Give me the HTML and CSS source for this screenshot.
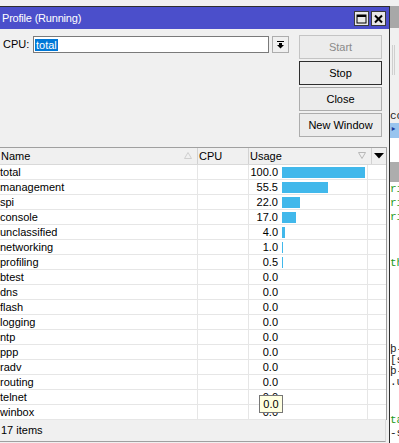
FILE: index.html
```html
<!DOCTYPE html>
<html lang="en">
<head>
    <meta charset="UTF-8">
    <meta name="viewport" content="width=device-width, initial-scale=1.0">
    <title>Profile (Running)</title>
    <link rel="stylesheet" href="styles.css">
</head>
<body>
    <div class="desk">
        <div class="window">
            <!-- Barra de titulo -->
            <div class="titlebar">
                <span class="title">Profile (Running)</span>
                <span class="tb-btn">
                    <svg width="11" height="10" viewBox="0 0 11 10"><rect x="1" y="1" width="9" height="8" fill="none" stroke="#000" stroke-width="1"/><rect x="1" y="1" width="9" height="2" fill="#000"/></svg>
                </span>
                <span class="tb-btn">
                    <svg width="11" height="10" viewBox="0 0 11 10"><path d="M2 1.5 L9 8.5 M9 1.5 L2 8.5" stroke="#000" stroke-width="2"/></svg>
                </span>
            </div>

            <!-- Selector de CPU y botones -->
            <div class="top">
                <div class="cpu-row">
                    <span class="cpu-label">CPU:</span>
                    <div class="combo"><span class="sel">total</span></div>
                    <div class="drop">
                        <svg width="9" height="8" viewBox="0 0 9 8"><rect x="1" y="0" width="7" height="1" fill="#000"/><rect x="3" y="2" width="3" height="2" fill="#000"/><path d="M1 4 L8 4 L4.5 7.5 Z" fill="#000"/></svg>
                    </div>
                </div>
                <div class="buttons">
                    <button class="btn" disabled>Start</button>
                    <button class="btn default">Stop</button>
                    <button class="btn">Close</button>
                    <button class="btn">New Window</button>
                </div>
            </div>

            <!-- Tabla -->
            <div class="table">
                <div class="head">
                    <div class="hcell">Name
                        <svg class="sort" width="8" height="7" viewBox="0 0 8 7"><path d="M4 0.5 L7.5 6.5 L0.5 6.5 Z" fill="none" stroke="#cfcfcf"/></svg>
                    </div>
                    <div class="hcell">CPU</div>
                    <div class="hcell">Usage
                        <svg class="sort" width="8" height="7" viewBox="0 0 8 7"><path d="M0.5 0.5 L7.5 0.5 L4 6.5 Z" fill="none" stroke="#b8b8b8"/></svg>
                    </div>
                    <div class="hcell menu">
                        <svg width="10" height="6" viewBox="0 0 10 6"><path d="M0 0 L10 0 L5 5.5 Z" fill="#000"/></svg>
                    </div>
                </div>
                <div id="rows"></div>
            </div>

            <div class="status">17 items</div>

            <div class="tip">0.0</div>
        </div>

        <!-- Ventana de atras -->
        <div class="behind">
            <div class="b-gray"></div>
            <div class="b-light"><span class="vl"></span><span class="vl"></span></div>
            <div class="b-text">co</div>
            <div class="b-sel">&#8227;</div>
            <div class="b-white"></div>
            <div class="b-gray2"></div>
            <div class="b-code">
                <div class="g">ri</div>
                <div class="g">ri</div>
                <div class="g">ri</div>
                <div class="g th">th</div>
                <div class="blk">
                    <div>&thorn;-</div>
                    <div>[s</div>
                    <div>&thorn;-</div>
                    <div>.u</div>
                </div>
                <div class="blk2">
                    <div class="g">ta</div>
                    <div>-s</div>
                </div>
            </div>
        </div>
    </div>

    <script>
        const datos = [
            ["total", 100.0], ["management", 55.5], ["spi", 22.0], ["console", 17.0],
            ["unclassified", 4.0], ["networking", 1.0], ["profiling", 0.5], ["btest", 0.0],
            ["dns", 0.0], ["flash", 0.0], ["logging", 0.0], ["ntp", 0.0],
            ["ppp", 0.0], ["radv", 0.0], ["routing", 0.0], ["telnet", 0.0], ["winbox", 0.0]
        ];

        const contenedor = document.getElementById('rows');
        datos.forEach(([nombre, uso]) => {
            const fila = document.createElement('div');
            fila.className = 'row';
            let barra = '';
            if (uso > 0) {
                const ancho = Math.max(1, Math.round(uso * 0.83));
                barra = `<span class="bar" style="width: ${ancho}px"></span>`;
            }
            fila.innerHTML = `<div class="cell">${nombre}</div><div class="cell"></div>` +
                `<div class="cell usage"><span class="num">${uso.toFixed(1)}</span>${barra}</div><div class="cell"></div>`;
            contenedor.appendChild(fila);
        });
    </script>
</body>
</html>
```

FILE: styles.css
```css
body {
    margin: 0;
    background: #f0f0f0;
    font-family: "Liberation Sans", Arial, sans-serif;
    font-size: 11px;
    color: #000;
}
.desk {
    display: flex;
    height: 443px;
    overflow: hidden;
    padding-top: 6px;
    box-sizing: border-box;
}
.window {
    position: relative;
    width: 390px;
    flex: none;
    border-top: 1px solid #2e2e2e;
    border-right: 1px solid #2e2e2e;
    box-sizing: border-box;
    background: #f0f0f0;
}
.titlebar {
    display: flex;
    align-items: center;
    height: 22px;
    background: #4b4fcb;
    padding: 0 3px 0 2px;
    gap: 2px;
}
.title {
    flex: 1;
    color: #fff;
    font-size: 11px;
    letter-spacing: -0.2px;
}
.tb-btn {
    width: 15px;
    height: 15px;
    box-sizing: border-box;
    border: 1px solid #3a3a3a;
    background: #e8e8e8;
    display: flex;
    align-items: center;
    justify-content: center;
    margin-top: 1px;
}
.top {
    display: flex;
    justify-content: space-between;
    height: 118px;
    padding: 6px 7px 0 3px;
    box-sizing: border-box;
}
.cpu-row {
    display: flex;
    align-items: flex-start;
    margin-top: 1px;
}
.cpu-label {
    width: 30px;
    line-height: 17px;
    font-size: 11px;
}
.combo {
    width: 236px;
    height: 17px;
    box-sizing: border-box;
    border: 1px solid #7a7a7a;
    background: #fff;
    padding: 2px 0 0 1px;
    font-size: 11px;
}
.sel {
    display: inline-block;
    background: #0078d7;
    color: #fff;
    line-height: 12px;
    padding: 0 1px;
}
.drop {
    width: 17px;
    height: 17px;
    box-sizing: border-box;
    border: 1px solid #adadad;
    background: #f0f0f0;
    margin-left: 3px;
    display: flex;
    align-items: center;
    justify-content: center;
}
.buttons {
    display: flex;
    flex-direction: column;
    gap: 2px;
}
.btn {
    width: 83px;
    height: 24px;
    border: 1px solid #adadad;
    background: #ececec;
    font-family: "Liberation Sans", Arial, sans-serif;
    font-size: 11px;
    color: #000;
    padding: 0;
}
.btn:disabled {
    color: #8a8a8a;
    border-color: #c4c4c4;
}
.btn.default {
    border-color: #2e2e2e;
}
.table {
    width: 387px;
    height: 273px;
    box-sizing: border-box;
    border-top: 1px solid #a0a0a0;
    border-right: 1px solid #9c9c9c;
    border-bottom: 1px solid #9c9c9c;
    background: #fff;
}
.head {
    display: grid;
    grid-template-columns: 198px 51px 123px 14px;
    height: 17px;
    background: #f0f0f0;
    border-bottom: 1px solid #d9d9d9;
    box-sizing: border-box;
}
.hcell {
    position: relative;
    display: flex;
    align-items: center;
    padding-left: 1px;
    border-right: 1px solid #d2d2d2;
    font-size: 11px;
}
.hcell.menu {
    border-right: none;
    justify-content: center;
    padding-left: 0;
}
.sort {
    position: absolute;
    right: 5px;
    top: 4px;
}
.row {
    display: grid;
    grid-template-columns: 198px 51px 119px 18px;
    height: 15px;
    border-bottom: 1px solid #e6e6e6;
    box-sizing: border-box;
}
.cell {
    border-right: 1px solid #e6e6e6;
    line-height: 14px;
    font-size: 11px;
    white-space: nowrap;
}
.cell:last-child {
    border-right: none;
}
.usage {
    display: flex;
    align-items: center;
}
.num {
    width: 29px;
    text-align: right;
}
.bar {
    height: 11px;
    margin-left: 4px;
    background: #41b8eb;
}
.status {
    width: 386px;
    height: 22px;
    box-sizing: border-box;
    border-bottom: 1px solid #a0a0a0;
    border-right: 1px solid #d9d9d9;
    padding-left: 1px;
    line-height: 21px;
    font-size: 11px;
}
.tip {
    position: absolute;
    left: 259px;
    top: 388px;
    width: 24px;
    height: 18px;
    box-sizing: border-box;
    border: 1px solid #767676;
    background: #ffffe1;
    font-size: 11px;
    line-height: 16px;
    text-align: center;
}
.behind {
    flex: 1;
    background: #fff;
    font-family: "Liberation Mono", monospace;
    font-size: 11px;
    overflow: hidden;
    white-space: nowrap;
}
.b-gray {
    height: 22px;
    background: #a8a8a8;
}
.b-light {
    height: 73px;
    background: #f0f0f0;
    display: flex;
    gap: 1px;
    padding: 17px 0 0 2px;
    box-sizing: border-box;
}
.vl {
    width: 1px;
    height: 30px;
    background: #cfcfcf;
}
.b-text {
    height: 22px;
    background: #f0f0f0;
    line-height: 30px;
    color: #222;
}
.b-sel {
    height: 15px;
    background: #99c4ee;
    line-height: 15px;
    color: #1c3f9e;
}
.b-white {
    height: 24px;
    background: #fff;
}
.b-gray2 {
    height: 20px;
    background: #adadad;
}
.b-code {
    line-height: 14px;
    color: #222;
}
.th {
    margin-top: 32px;
}
.blk {
    margin-top: 74px;
    line-height: 11px;
}
.blk2 {
    margin-top: 26px;
    line-height: 13px;
}
.g {
    color: #1a9a1a;
}
```
